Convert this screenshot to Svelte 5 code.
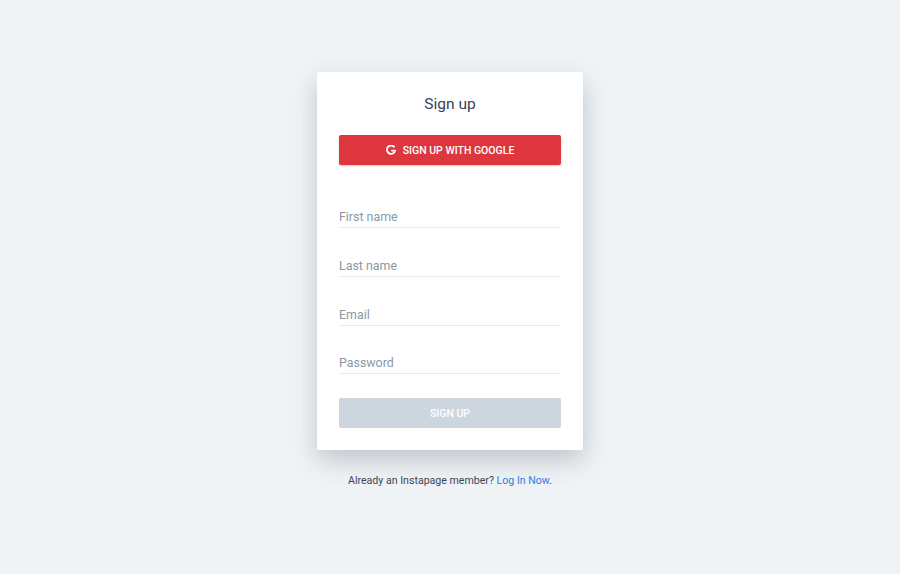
<script>
	let fields = ['First name', 'Last name', 'Email', 'Password']
</script>

<main class="page">
	<form class="card" on:submit|preventDefault>
		<h1>Sign up</h1>
		<button type="button" class="btn google">
			<svg viewBox="0 0 24 24" width="10" height="10" aria-hidden="true">
				<path fill="none" stroke="#fff" stroke-width="4.4" d="M20.5 5.6A10 10 0 1 0 22 13.6H12.5"/>
			</svg>
			SIGN UP WITH GOOGLE
		</button>
		<div class="fields">
			{#each fields as field}
				<label class="field">{field}</label>
			{/each}
		</div>
		<button type="button" class="btn submit">SIGN UP</button>
	</form>
	<p class="login">Already an Instapage member? <a href="#login">Log In Now</a>.</p>
</main>

<style>
	:global(body) {
		background: #f0f3f5;
		font-family: Roboto, "Liberation Sans", sans-serif;
	}

	.page {
		display: flex;
		flex-direction: column;
		align-items: center;
		height: 574px;
		padding-top: 72px;
		box-sizing: border-box;
	}

	.card {
		width: 266px;
		height: 378px;
		box-sizing: border-box;
		padding: 22px 22px 0;
		background: #fff;
		border-radius: 2px;
		box-shadow: 0 10px 24px rgba(60, 80, 100, 0.28);
	}

	h1 {
		margin: 0 0 20px;
		height: 21px;
		line-height: 21px;
		font-size: 15.5px;
		font-weight: 400;
		text-align: center;
		color: #34435a;
	}

	.btn {
		display: flex;
		align-items: center;
		justify-content: center;
		gap: 7px;
		width: 100%;
		height: 30px;
		padding: 0;
		border: 0;
		border-radius: 2px;
		font-family: inherit;
		font-size: 10.5px;
		font-weight: 500;
		color: #fff;
	}

	.google {
		background: #de363f;
		box-shadow: 0 1px 2px rgba(0, 0, 0, 0.2);
	}

	.submit {
		background: #cdd6de;
	}

	.fields {
		display: flex;
		flex-direction: column;
		gap: 27.75px;
		margin-top: 42px;
		margin-bottom: 24px;
	}

	.field {
		display: block;
		height: 20px;
		line-height: 20px;
		font-size: 12.4px;
		color: #8b98a3;
		border-bottom: 1px solid #e8ebee;
	}

	.login {
		margin: 24px 0 0;
		font-size: 10.6px;
		line-height: 14px;
		color: #3a4658;
	}

	a {
		color: #2b7de0;
		text-decoration: none;
	}
</style>
